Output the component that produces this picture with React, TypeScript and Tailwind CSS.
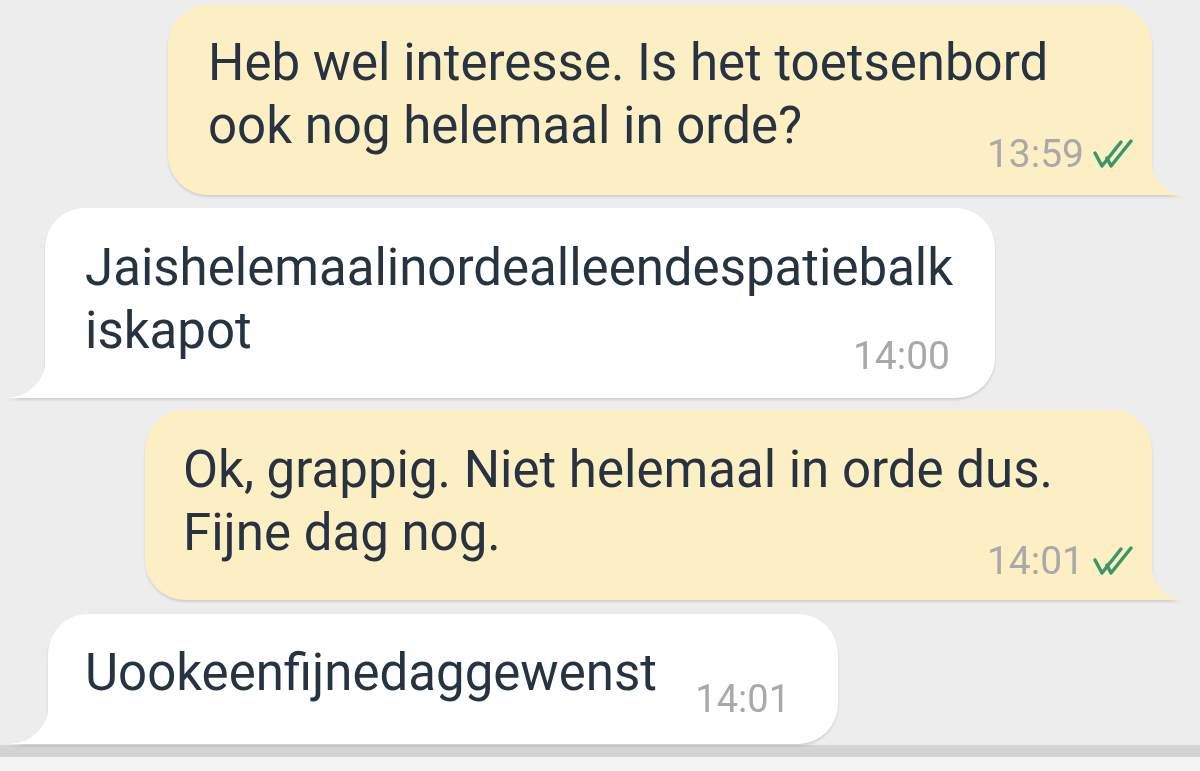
import React from 'react';

function Ticks() {
  return (
    <svg width="42" height="30" viewBox="0 0 42 30" className="ml-[8px] shrink-0">
      <path d="M3 14 L10 27 L29 3" fill="none" stroke="#3b9767" strokeWidth="3.5" strokeLinejoin="round" strokeLinecap="round" />
      <path d="M15 19 L19 27 L39 2" fill="none" stroke="#3b9767" strokeWidth="3.5" strokeLinejoin="round" strokeLinecap="round" />
    </svg>
  );
}

function OutTail() {
  return (
    <svg width="32" height="38" viewBox="0 0 32 38" className="absolute bottom-0 right-[-31px]">
      <path d="M0 0 A32 38 0 0 0 32 38 L0 38 Z" fill="#fdefc4" />
    </svg>
  );
}

function InTail() {
  return (
    <svg width="40" height="40" viewBox="0 0 40 40" className="absolute bottom-0 left-[-39px]">
      <path d="M40 0 A40 40 0 0 1 0 40 L40 40 Z" fill="#ffffff" />
    </svg>
  );
}

export default function App() {
  return (
    <div className="w-[1200px] h-[771px] bg-[#ededed] flex flex-col overflow-hidden font-['Roboto','Liberation_Sans',sans-serif] text-[#283341]">
      <div className="flex-1 flex flex-col pt-[5px]">
        {/* outgoing 1 */}
        <div className="self-end mr-[48px] relative w-[984px] h-[190px] bg-[#fdefc4] rounded-t-[40px] rounded-bl-[40px] drop-shadow-[0_2px_1px_rgba(0,0,0,0.12)] pl-[40px] pr-[18px] pt-[26px]">
          <p className="text-[51px] leading-[63px]">Heb wel interesse. Is het toetsenbord<br />ook nog helemaal in orde?</p>
          <div className="flex items-center justify-end -mt-[25px] text-[39px] leading-[44px] text-[#a9a9a9]">
            13:59
            <Ticks />
          </div>
          <OutTail />
        </div>

        {/* incoming 1 */}
        <div className="self-start ml-[45px] mt-[13px] relative w-[950px] h-[190px] bg-white rounded-t-[40px] rounded-br-[40px] drop-shadow-[0_2px_1px_rgba(0,0,0,0.12)] pl-[40px] pr-[45px] pt-[28px]">
          <p className="text-[51px] leading-[63px]">Jaishelemaalinordealleendespatiebalk<br />iskapot</p>
          <div className="flex justify-end -mt-[28px] text-[39px] leading-[44px] text-[#a9a9a9]">14:00</div>
          <InTail />
        </div>

        {/* outgoing 2 */}
        <div className="self-end mr-[48px] mt-[12px] relative w-[1007px] h-[190px] bg-[#fdefc4] rounded-t-[40px] rounded-bl-[40px] drop-shadow-[0_2px_1px_rgba(0,0,0,0.12)] pl-[38px] pr-[18px] pt-[28px]">
          <p className="text-[51px] leading-[63px]">Ok, grappig. Niet helemaal in orde dus.<br />Fijne dag nog.</p>
          <div className="flex items-center justify-end -mt-[25px] text-[39px] leading-[44px] text-[#a9a9a9]">
            14:01
            <Ticks />
          </div>
          <OutTail />
        </div>

        {/* incoming 2 */}
        <div className="self-start ml-[48px] mt-[14px] relative w-[790px] h-[130px] bg-white rounded-t-[40px] rounded-br-[40px] drop-shadow-[0_2px_1px_rgba(0,0,0,0.12)] pl-[37px] pr-[48px] pt-[27px] flex items-start justify-between">
          <p className="text-[51px] leading-[63px]">Uookeenfijnedaggewenst</p>
          <span className="mt-[36px] text-[38px] leading-[44px] text-[#a9a9a9]">14:01</span>
          <InTail />
        </div>
      </div>
      <div className="h-[12px] bg-[#d3d3d3]" />
      <div className="h-[14px] bg-[#f4f4f4]" />
    </div>
  );
}
